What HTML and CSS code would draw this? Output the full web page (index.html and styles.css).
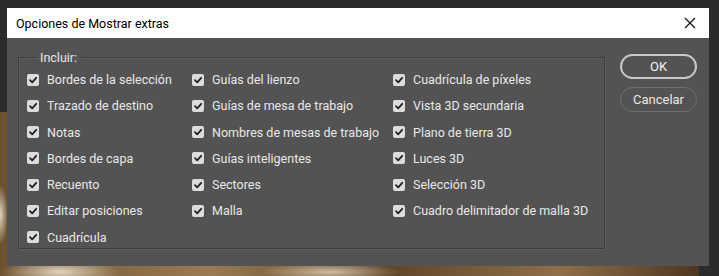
FILE: index.html
```html
<!DOCTYPE html>
<html>
<head>
    <meta charset="UTF-8">
    <title>Opciones de Mostrar extras</title>
    <link rel="stylesheet" href="styles.css">
</head>
<body>
    <div class="dialogo">
        <div class="barra-titulo">
            <span class="titulo">Opciones de Mostrar extras</span>
            <svg class="cerrar" width="12" height="12" viewBox="0 0 12 12">
                <path d="M1 1 L11 11 M11 1 L1 11" stroke="#111" stroke-width="1.2" fill="none"/>
            </svg>
        </div>
        <div class="cuerpo">
            <fieldset class="grupo">
                <legend>Incluir:</legend>
                <div class="opciones">
                    <!-- columna 1 -->
                    <label class="opcion c1 f1"><span class="caja"></span>Bordes de la selección</label>
                    <label class="opcion c1 f2"><span class="caja"></span>Trazado de destino</label>
                    <label class="opcion c1 f3"><span class="caja"></span>Notas</label>
                    <label class="opcion c1 f4"><span class="caja"></span>Bordes de capa</label>
                    <label class="opcion c1 f5"><span class="caja"></span>Recuento</label>
                    <label class="opcion c1 f6"><span class="caja"></span>Editar posiciones</label>
                    <label class="opcion c1 f7"><span class="caja"></span>Cuadrícula</label>
                    <!-- columna 2 -->
                    <label class="opcion c2 f1"><span class="caja"></span>Guías del lienzo</label>
                    <label class="opcion c2 f2"><span class="caja"></span>Guías de mesa de trabajo</label>
                    <label class="opcion c2 f3"><span class="caja"></span>Nombres de mesas de trabajo</label>
                    <label class="opcion c2 f4"><span class="caja"></span>Guías inteligentes</label>
                    <label class="opcion c2 f5"><span class="caja"></span>Sectores</label>
                    <label class="opcion c2 f6"><span class="caja"></span>Malla</label>
                    <!-- columna 3 -->
                    <label class="opcion c3 f1"><span class="caja"></span>Cuadrícula de píxeles</label>
                    <label class="opcion c3 f2"><span class="caja"></span>Vista 3D secundaria</label>
                    <label class="opcion c3 f3"><span class="caja"></span>Plano de tierra 3D</label>
                    <label class="opcion c3 f4"><span class="caja"></span>Luces 3D</label>
                    <label class="opcion c3 f5"><span class="caja"></span>Selección 3D</label>
                    <label class="opcion c3 f6"><span class="caja"></span>Cuadro delimitador de malla 3D</label>
                </div>
            </fieldset>
            <div class="botones">
                <button class="boton principal">OK</button>
                <button class="boton">Cancelar</button>
            </div>
        </div>
    </div>
</body>
</html>
```

FILE: styles.css
```css
html, body {
    margin: 0;
    height: 100%;
}

body {
    font-family: Roboto, "Liberation Sans", sans-serif;
    /* foto de fondo detras del dialogo */
    background:
        radial-gradient(ellipse 60px 14px at 60px 272px, rgba(235, 225, 205, 0.9), rgba(235, 225, 205, 0) 100%) no-repeat,
        radial-gradient(ellipse 70px 10px at 330px 272px, rgba(230, 215, 190, 0.8), rgba(230, 215, 190, 0) 100%) no-repeat,
        radial-gradient(ellipse 8px 30px at 0 215px, rgba(240, 230, 210, 0.9), rgba(240, 230, 210, 0) 100%) no-repeat,
        linear-gradient(90deg, #6e5230, #9a7b52 30%, #5e4427 55%, #8f6f48 80%, #4d3620) 0 112px / 699px 164px no-repeat,
        #2b2b2b;
    overflow: hidden;
}

.dialogo {
    margin: 8px 0 0 7px;
    width: 702px;
    height: 258px;
    background-color: #535353;
    display: flex;
    flex-direction: column;
}

.barra-titulo {
    height: 30px;
    background-color: #ffffff;
    display: flex;
    align-items: center;
    justify-content: space-between;
    padding: 0 13px 0 9px;
    flex-shrink: 0;
}

.titulo {
    font-family: Roboto, sans-serif;
    font-size: 12.5px;
    color: #000;
}

.cuerpo {
    flex: 1;
    display: flex;
    align-items: flex-start;
    padding: 12px 0 0 11px;
}

.grupo {
    margin: 0;
    width: 587px;
    height: 199px;
    box-sizing: border-box;
    border: 1px solid #3d3d3d;
    box-shadow: inset 1px 1px 0 #5e5e5e, 1px 1px 0 #5e5e5e;
    padding: 1.5px 0 0 8px;
}

.grupo legend {
    font-size: 12.5px;
    color: #e6e6e6;
    padding: 0 4px;
    margin-left: 9px;
}

.opciones {
    display: grid;
    grid-template-columns: 165px 201px 1fr;
    grid-template-rows: repeat(7, 26.25px);
}

.c1 { grid-column: 1; }
.c2 { grid-column: 2; }
.c3 { grid-column: 3; }
.f1 { grid-row: 1; }
.f2 { grid-row: 2; }
.f3 { grid-row: 3; }
.f4 { grid-row: 4; }
.f5 { grid-row: 5; }
.f6 { grid-row: 6; }
.f7 { grid-row: 7; }

.opcion {
    display: flex;
    align-items: center;
    font-size: 12.5px;
    color: #e8e8e8;
    white-space: nowrap;
    cursor: pointer;
}

.caja {
    width: 12px;
    height: 12px;
    border-radius: 2px;
    background-color: #dcdcdc;
    margin-right: 8px;
    flex-shrink: 0;
    background-image: url("data:image/svg+xml,%3Csvg xmlns='http://www.w3.org/2000/svg' width='12' height='12' viewBox='0 0 12 12'%3E%3Cpath d='M3 6.2 L5.2 8.3 L9.2 3.8' stroke='%23222' stroke-width='1.8' fill='none' stroke-linecap='round' stroke-linejoin='round'/%3E%3C/svg%3E");
}

.botones {
    display: flex;
    flex-direction: column;
    gap: 8px;
    margin: 4px 0 0 15px;
}

.boton {
    width: 77px;
    height: 25px;
    border-radius: 13px;
    border: 1px solid #6e6e6e;
    background-color: transparent;
    color: #e8e8e8;
    font-family: Roboto, "Liberation Sans", sans-serif;
    font-size: 13px;
    padding: 0;
}

.boton.principal {
    border: 2px solid #c9c9c9;
    color: #f2f2f2;
}
```
